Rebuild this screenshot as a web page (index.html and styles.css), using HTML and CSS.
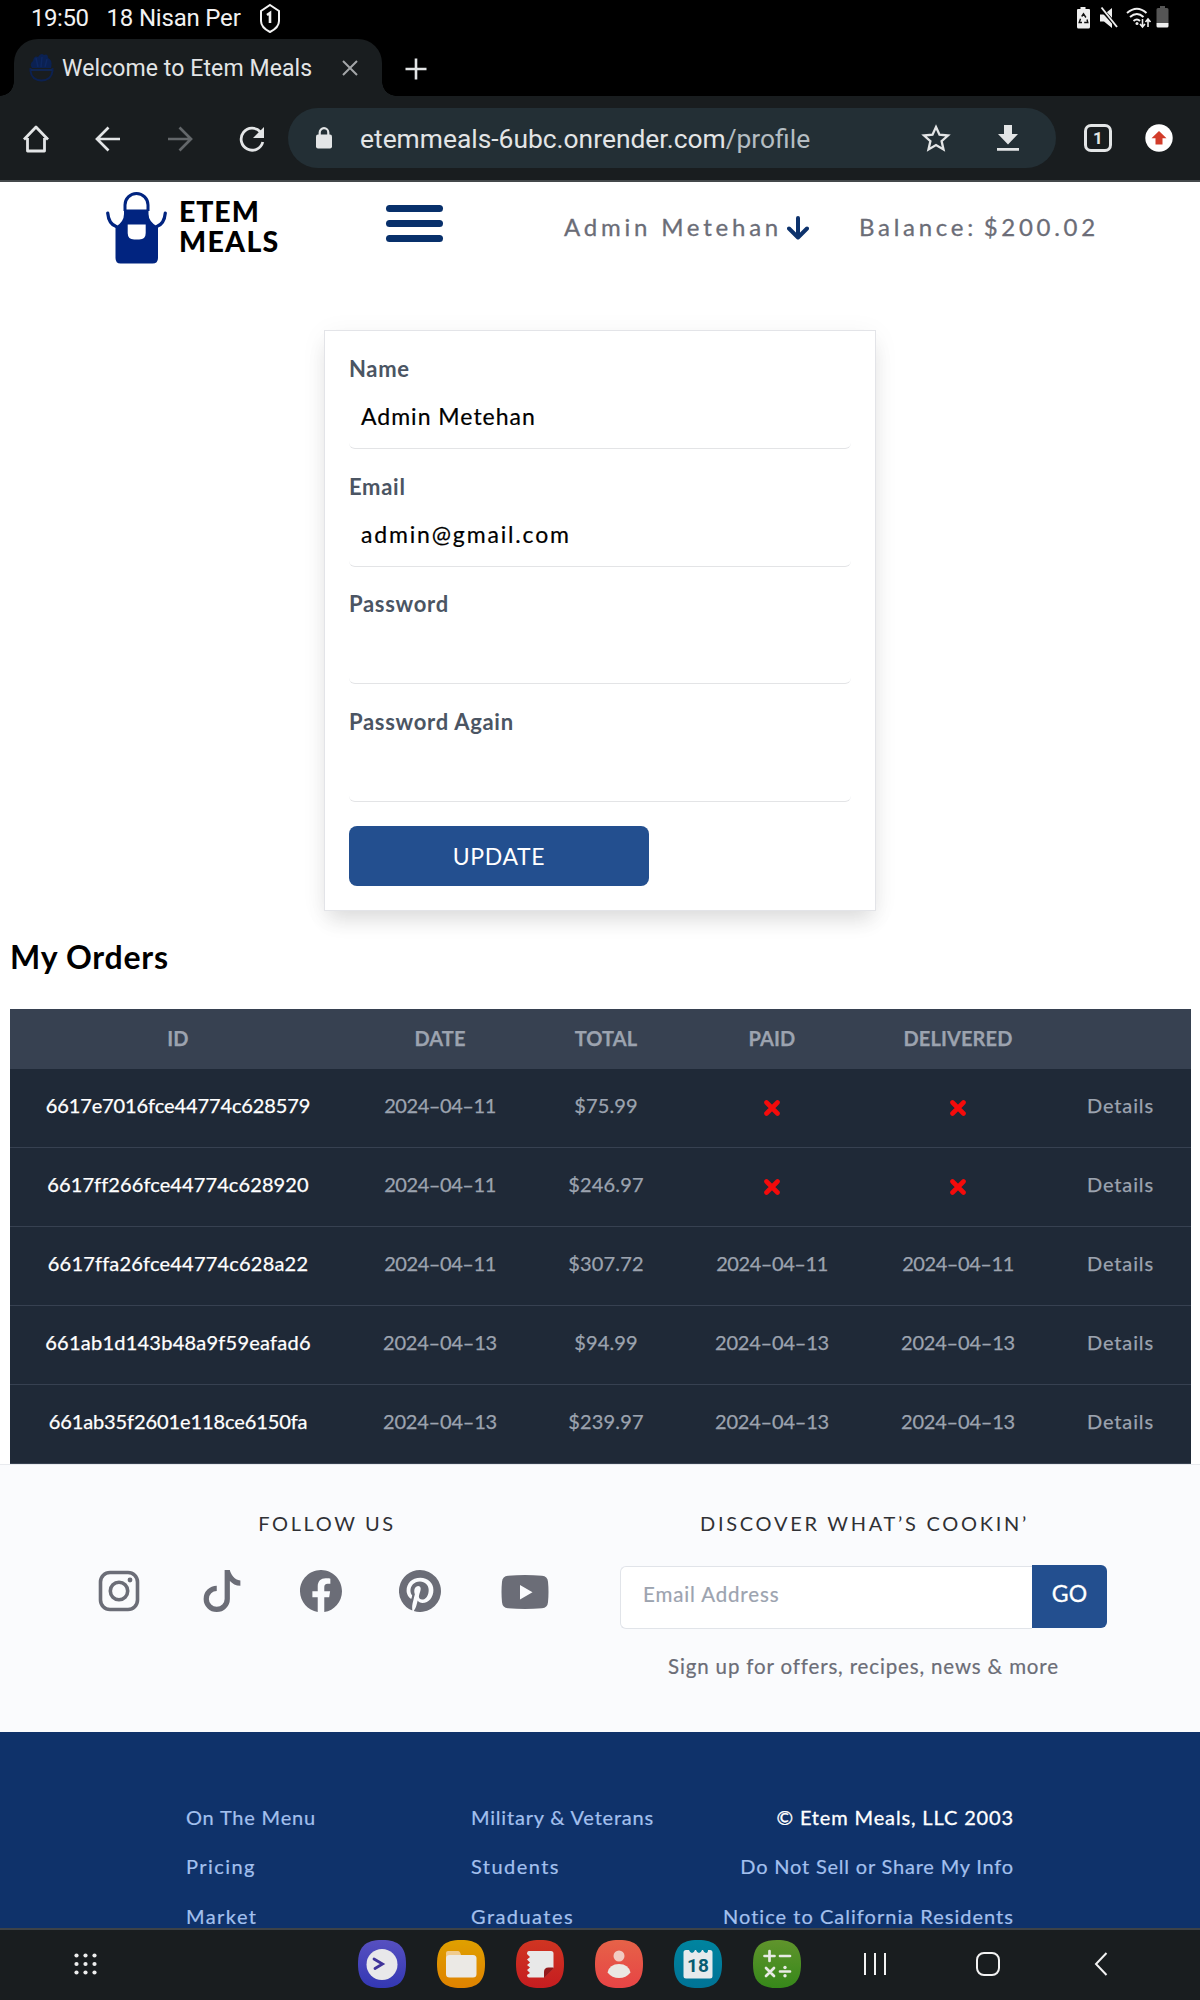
FILE: index.html
```html
<!DOCTYPE html>
<html lang="en">
<head>
<meta charset="utf-8">
<title>Welcome to Etem Meals</title>
<link rel="stylesheet" href="styles.css">
</head>
<body>
<div class="status">
  <span class="clock">19:50</span><span class="date">18 Nisan Per</span>
  <svg class="shield" width="22" height="31" viewBox="0 0 22 31"><path d="M11 2 20 8v10c0 5-5 9-9 11-4-2-9-6-9-11V8z" fill="none" stroke="#f2f2f2" stroke-width="2"/><path d="M8 12l3-2v10" fill="none" stroke="#f2f2f2" stroke-width="2.6"/></svg>
  <svg class="status-icons" width="94" height="24" viewBox="0 0 94 24">
    <path d="M4.500 1h5v2H13q1 0 1 1v17q0 1.500-1.500 1.500h-10Q1 22.500 1 21V4q0-1 1-1h2.500z" fill="#eee"/>
    <path d="M5.700 10.500l1.800-2.700 2.400 3.700M11 13.500l.8 3H8.200M6 16.500H3.200l1.300-3.700" fill="none" stroke="#111" stroke-width="1.400"/>
    <path d="M24 8.500h4L36 2v20l-8-6.500h-4z" fill="#eee"/><path d="M25 2.500l17 19" stroke="#000" stroke-width="4"/><path d="M25.500 1.500l15.500 19.500" stroke="#eee" stroke-width="1.900"/>
    <g fill="none" stroke="#eee" stroke-width="2"><path d="M51 7q10-8.500 19.500 0M54 11q7-6 13.500 0M57.500 15q3.500-3 6.500 0"/><path d="M66.500 13v7M64 18l2.500 3 2.500-3M72 21v-7M69.500 16l2.500-3 2.500 3" stroke-width="1.600"/></g><circle cx="61" cy="17.500" r="1.500" fill="#eee"/>
    <path d="M84 0h5v2h2q1.500 0 1.500 1.500V17h-12V3.500Q80.500 2 82 2h2z" fill="#555"/><path d="M80.500 17h12v3q0 1.500-1.500 1.500h-9q-1.500 0-1.500-1.500z" fill="#eee"/>
  </svg>
</div>
<div class="tabs">
  <div class="tab">
    <svg class="favicon" width="25" height="29" viewBox="0 0 25 29"><path d="M3 15Q0 11 4 8q1-6 5-4 3-5 6-2 4-2 4 3 5 2 3 10z" fill="#0b2152"/><path d="M1.500 15v3q1 9 11 9.500 10-.5 11-9.500v-3" fill="none" stroke="#0c2150" stroke-width="2"/><path d="M2 17h21M7 5l2 9M13 4l-1 10M18 6l-2 8" stroke="#0e2862" stroke-width="1.500" fill="none"/></svg>
    <span class="tab-title">Welcome to Etem Meals</span>
    <svg width="18" height="18" viewBox="0 0 18 18"><path d="M2 2l14 14M16 2L2 16" stroke="#a3a6a8" stroke-width="2"/></svg>
  </div>
  <svg class="newtab" width="22" height="22" viewBox="0 0 22 22"><path d="M11 .5v21M.5 11h21" stroke="#e3e5e6" stroke-width="2.600"/></svg>
</div>
<div class="toolbar">
  <svg class="home" width="28" height="28" viewBox="0 0 28 28"><path d="M5.500 13v13h17V13M2 14.500L14 2l12 12.500" fill="none" stroke="#e3e5e6" stroke-width="2.800" stroke-linejoin="round"/></svg>
  <svg class="back" width="26" height="26" viewBox="0 0 26 26"><path d="M25 13H2.500M13.500 1.500L2 13l11.500 11.500" fill="none" stroke="#e3e5e6" stroke-width="2.700"/></svg>
  <svg class="fwd" width="26" height="26" viewBox="0 0 26 26"><path d="M1 13h22.500M12.500 1.500L24 13 12.500 24.500" fill="none" stroke="#63676a" stroke-width="2.700"/></svg>
  <svg class="reload" width="26" height="26" viewBox="0 0 26 26"><path d="M21.500 6A11 11 0 1 0 23.800 16" fill="none" stroke="#e3e5e6" stroke-width="2.800"/><path d="M25 1v11H14z" fill="#e3e5e6"/></svg>
  <div class="urlbar">
    <svg class="lock" width="16" height="22" viewBox="0 0 16 22"><rect y="7.500" width="16" height="14" rx="2" fill="#e3e5e6"/><path d="M3.700 9V5.500a4.300 4.300 0 0 1 8.600 0V9" fill="none" stroke="#e3e5e6" stroke-width="2.200"/></svg>
    <span class="url">etemmeals-6ubc.onrender.com<span class="path">/profile</span></span>
    <svg class="star" width="30" height="28" viewBox="0 0 30 28"><path d="M15 3l3.500 7.700 8.500.8-6.400 5.600 1.900 8.300L15 21l-7.500 4.400 1.900-8.300L3 11.500l8.500-.8z" fill="none" stroke="#e3e5e6" stroke-width="2.300"/></svg>
    <svg class="dl" width="22" height="26" viewBox="0 0 22 26"><path d="M7 0h8v9h6L11 19.500 1 9h6zM0 23h22v2.800H0z" fill="#e3e5e6"/></svg>
  </div>
  <div class="tabcount">1</div>
  <svg class="upd" width="28" height="28" viewBox="0 0 28 28"><circle cx="14" cy="14" r="13.700" fill="#fff"/><path d="M14 7l7.500 7.300h-4V20.500h-7v-6.200h-4z" fill="#d23c2a"/></svg>
</div>
<main class="page">
  <header class="head">
    <svg class="apron" width="61" height="73" viewBox="0 0 61 73"><path d="M19 20V14a11.500 11.500 0 0 1 23 0v6" fill="none" stroke="#012480" stroke-width="3"/><path d="M1.700 22q1 11 8.500 13.500M59.300 22q-1 11-8.500 13.500" fill="none" stroke="#012480" stroke-width="3.200" stroke-linecap="round"/><path d="M18 18.500h24.500V23q0 8 9.500 13v31q0 5.500-5.500 5.500h-32Q9.500 72.500 9.500 67V36Q18 31 18 23z" fill="#012480"/><path d="M21.700 33.500h18v8.500q0 6.500-6.500 6.500h-5q-6.500 0-6.500-6.500z" fill="#fff"/></svg>
    <div class="brand"><span class="brand-top">ETEM</span><span class="brand-bottom">MEALS</span></div>
    <div class="burger"><i></i><i></i><i></i></div>
    <span class="nav user">Admin Metehan</span>
    <svg class="down" width="22" height="24" viewBox="0 0 22 24"><path d="M11 2v19M2 12.500l9 9 9-9" fill="none" stroke="#0d326c" stroke-width="4" stroke-linecap="round" stroke-linejoin="round"/></svg>
    <span class="nav balance">Balance:&thinsp;$200.02</span>
  </header>
  <form class="card">
    <div class="field"><label>Name</label><div class="input">Admin Metehan</div></div>
    <div class="field"><label>Email</label><div class="input email">admin@gmail.com</div></div>
    <div class="field"><label>Password</label><div class="input"></div></div>
    <div class="field"><label>Password Again</label><div class="input"></div></div>
    <div class="btn">UPDATE</div>
  </form>
  <h2>My Orders</h2>
  <table class="orders">
    <colgroup><col class="c1"><col class="c2"><col class="c3"><col class="c4"><col class="c5"><col class="c6"></colgroup>
    <thead><tr><th>ID</th><th>DATE</th><th>TOTAL</th><th>PAID</th><th>DELIVERED</th><th></th></tr></thead>
    <tbody>
      <tr><td>6617e7016fce44774c628579</td><td>2024–04–11</td><td>$75.99</td><td><svg class="x" width="16" height="16" viewBox="0 0 16 16"><path d="M2.500 2.500l11 11M13.500 2.500l-11 11"/></svg></td><td><svg class="x" width="16" height="16" viewBox="0 0 16 16"><path d="M2.500 2.500l11 11M13.500 2.500l-11 11"/></svg></td><td>Details</td></tr>
      <tr><td>6617ff266fce44774c628920</td><td>2024–04–11</td><td>$246.97</td><td><svg class="x" width="16" height="16" viewBox="0 0 16 16"><path d="M2.500 2.500l11 11M13.500 2.500l-11 11"/></svg></td><td><svg class="x" width="16" height="16" viewBox="0 0 16 16"><path d="M2.500 2.500l11 11M13.500 2.500l-11 11"/></svg></td><td>Details</td></tr>
      <tr><td>6617ffa26fce44774c628a22</td><td>2024–04–11</td><td>$307.72</td><td>2024–04–11</td><td>2024–04–11</td><td>Details</td></tr>
      <tr><td>661ab1d143b48a9f59eafad6</td><td>2024–04–13</td><td>$94.99</td><td>2024–04–13</td><td>2024–04–13</td><td>Details</td></tr>
      <tr><td>661ab35f2601e118ce6150fa</td><td>2024–04–13</td><td>$239.97</td><td>2024–04–13</td><td>2024–04–13</td><td>Details</td></tr>
    </tbody>
  </table>
  <section class="follow">
    <div class="social">
      <h3>FOLLOW US</h3>
      <div class="icons">
        <svg class="ig" width="42" height="42" viewBox="0 0 42 42" fill="none" stroke="#6b6d77"><rect x="2.500" y="2.500" width="37" height="37" rx="9.500" stroke-width="3.600"/><circle cx="21" cy="21" r="8.700" stroke-width="3.600"/><circle cx="32" cy="10" r="2.400" fill="#6b6d77" stroke="none"/></svg>
        <svg class="tt" width="42" height="42" viewBox="0 0 16 16"><path d="M9 0h1.980c.144.715.54 1.617 1.235 2.512C12.895 3.389 13.797 4 15 4v2c-1.753 0-3.070-.814-4-1.829V11a5 5 0 1 1-5-5v2a3 3 0 1 0 3 3z"/></svg>
        <svg class="fb" width="42" height="42" viewBox="0 0 16 16"><path d="M16 8.049c0-4.446-3.582-8.050-8-8.050C3.580 0-.002 3.603-.002 8.050c0 4.017 2.926 7.347 6.750 7.951v-5.625h-2.030V8.050H6.750V6.275c0-2.017 1.195-3.131 3.022-3.131.876 0 1.791.157 1.791.157v1.980h-1.009c-.993 0-1.303.621-1.303 1.258v1.510h2.218l-.354 2.326H9.250V16c3.824-.604 6.750-3.934 6.750-7.951"/></svg>
        <svg class="pin" width="42" height="42" viewBox="0 0 16 16"><path d="M8 0a8 8 0 0 0-2.915 15.452c-.07-.633-.134-1.606.027-2.297.146-.625.938-3.977.938-3.977s-.239-.479-.239-1.187c0-1.113.645-1.943 1.448-1.943.682 0 1.012.512 1.012 1.127 0 .686-.437 1.712-.663 2.663-.188.796.4 1.446 1.185 1.446 1.422 0 2.515-1.500 2.515-3.664 0-1.915-1.377-3.254-3.342-3.254-2.276 0-3.612 1.707-3.612 3.471 0 .688.265 1.425.595 1.826a.24.24 0 0 1 .056.23c-.061.252-.196.796-.222.907-.035.146-.116.177-.268.107-1-.465-1.624-1.926-1.624-3.100 0-2.523 1.834-4.840 5.286-4.840 2.775 0 4.932 1.977 4.932 4.620 0 2.757-1.739 4.976-4.151 4.976-.811 0-1.573-.421-1.834-.919l-.498 1.902c-.181.695-.669 1.566-.995 2.097A8 8 0 1 0 8 0"/></svg>
        <svg class="yt" width="48" height="34" viewBox="0 0 48 34"><path d="M7 .8Q24-.6 41 .8q5.500.5 6 6 1 10.200 0 20.400-.5 5.500-6 6-17 1.400-34 0-5.500-.5-6-6Q0 17 1 6.800q.5-5.500 6-6zM19 10v14.500L31.500 17.200z"/></svg>
      </div>
    </div>
    <div class="signup">
      <h3 class="discover">DISCOVER WHAT’S COOKIN’</h3>
      <div class="mail"><div class="mailbox">Email Address</div><div class="go">GO</div></div>
      <p>Sign up for offers, recipes, news &amp; more</p>
    </div>
  </section>
  <footer class="links">
    <div class="col a"><span>On The Menu</span><span class="wide">Pricing</span><span class="wide">Market</span></div>
    <div class="col b"><span>Military &amp; Veterans</span><span class="wide">Students</span><span class="wide">Graduates</span></div>
    <div class="col c"><span class="copy">© Etem Meals, LLC 2003</span><span>Do Not Sell or Share My Info</span><span class="notice">Notice to California Residents</span></div>
  </footer>
</main>
<nav class="dock">
  <svg class="apps" width="24" height="22" viewBox="0 0 24 22" fill="#eee"><circle cx="2.500" cy="2.500" r="2.100"/><circle cx="11.500" cy="2.500" r="2.100"/><circle cx="20.500" cy="2.500" r="2.100"/><circle cx="2.500" cy="11" r="2.100"/><circle cx="11.500" cy="11" r="2.100"/><circle cx="20.500" cy="11" r="2.100"/><circle cx="2.500" cy="19.500" r="2.100"/><circle cx="11.500" cy="19.500" r="2.100"/><circle cx="20.500" cy="19.500" r="2.100"/></svg>
  <div class="dock-apps">
    <svg width="48" height="48" viewBox="0 0 48 48"><defs><linearGradient id="p" x2="0" y2="1"><stop stop-color="#5750c0"/><stop offset="1" stop-color="#3338b4"/></linearGradient><linearGradient id="o" x2="0" y2="1"><stop stop-color="#dfa000"/><stop offset="1" stop-color="#df8200"/></linearGradient><linearGradient id="r" x2="0" y2="1"><stop stop-color="#d03522"/><stop offset="1" stop-color="#c51d20"/></linearGradient><linearGradient id="s" x2="0" y2="1"><stop stop-color="#e66248"/><stop offset="1" stop-color="#e74445"/></linearGradient><linearGradient id="t" x2="0" y2="1"><stop stop-color="#00849f"/><stop offset="1" stop-color="#007396"/></linearGradient><linearGradient id="g" x2="0" y2="1"><stop stop-color="#60942c"/><stop offset="1" stop-color="#36881a"/></linearGradient></defs><path d="M24 0C41 0 48 7 48 24S41 48 24 48 0 41 0 24 7 0 24 0z" fill="url(#p)"/><circle cx="24" cy="24.500" r="15.500" fill="#e8e8ea"/><path d="M16 19l8.500 5-7.500 4.500" fill="none" stroke="#40349a" stroke-width="2.800" stroke-linecap="round"/></svg>
    <svg width="48" height="48" viewBox="0 0 48 48"><path d="M24 0C41 0 48 7 48 24S41 48 24 48 0 41 0 24 7 0 24 0z" fill="url(#o)"/><path d="M9 20v-7q0-2 2-2h10q2 0 3 4h10v5z" fill="#f0cb8e"/><rect x="9" y="15" width="30.500" height="22.500" rx="3.500" fill="#ebe9e5"/></svg>
    <svg width="48" height="48" viewBox="0 0 48 48"><path d="M24 0C41 0 48 7 48 24S41 48 24 48 0 41 0 24 7 0 24 0z" fill="url(#r)"/><path d="M13 11h22q2.500 0 2.500 2.500V28L28 37.500H13q-2 0-2-2.500l3-2-3-3 3-2.500-3-2.500 3-2.500-3-3 3-2.500-3-3q0-3 2-3z" fill="#e8e8e8"/><path d="M37.500 27.500v1L28 38v-6q0-4.500 4.500-4.500z" fill="#94191b"/></svg>
    <svg width="48" height="48" viewBox="0 0 48 48"><path d="M24 0C41 0 48 7 48 24S41 48 24 48 0 41 0 24 7 0 24 0z" fill="url(#s)"/><circle cx="24" cy="16" r="5.500" fill="#f1cbc2"/><path d="M12.500 32.500q2-8.500 11.500-8.500t11.500 8.500Q31 38 24 38t-11.500-5.500z" fill="#eae8e2"/></svg>
    <svg width="48" height="48" viewBox="0 0 48 48"><path d="M24 0C41 0 48 7 48 24S41 48 24 48 0 41 0 24 7 0 24 0z" fill="url(#t)"/><path d="M12 10h3q1 3 3 3t3-3h1q1 3 3 3t3-3h1q1 3 3 3t2-3h2q2.500 0 2.500 2.500V36q0 2.500-2.500 2.500H12q-2.500 0-2.500-2.500V12.500Q9.500 10 12 10z" fill="#e6eaec"/><text x="24" y="31.500" text-anchor="middle" class="day">18</text></svg>
    <svg width="48" height="48" viewBox="0 0 48 48"><path d="M24 0C41 0 48 7 48 24S41 48 24 48 0 41 0 24 7 0 24 0z" fill="url(#g)"/><path d="M11.500 16h10M16.500 11v10M27 16h10M13 28l8 8M21 28l-8 8M27 31.500h10" stroke="#e8eae4" stroke-width="2.700" stroke-linecap="round"/><circle cx="32" cy="27.500" r="1.700" fill="#e8eae4"/><circle cx="32" cy="35.700" r="1.700" fill="#e8eae4"/></svg>
  </div>
  <svg class="recents" width="24" height="24" viewBox="0 0 24 24"><path d="M2 1v22M12 1v22M22 1v22" stroke="#f2f2f2" stroke-width="2"/></svg>
  <svg class="homebtn" width="24" height="24" viewBox="0 0 24 24"><rect x="1" y="1" width="22" height="22" rx="7" fill="none" stroke="#f2f2f2" stroke-width="2"/></svg>
  <svg class="backbtn" width="14" height="24" viewBox="0 0 14 24"><path d="M12.500 1L2 12l10.500 11" fill="none" stroke="#f2f2f2" stroke-width="2"/></svg>
</nav>
</body>
</html>
```
FILE: styles.css
```css
*{box-sizing:border-box}
body{margin:0;width:1200px;height:2000px;overflow:hidden;display:flex;flex-direction:column;background:#000;font-family:Lato,"Liberation Sans",sans-serif;color:#000}
svg{flex:none;display:block}

/* Device status bar */
.status{height:39px;flex:none;display:flex;align-items:center;padding:0 61px 3px 31px;font:24px/36px Roboto,sans-serif;color:#f2f2f2;white-space:nowrap}
.clock{letter-spacing:-.44px}
.date{margin-left:18px;letter-spacing:-.2px}
.shield{margin-left:18px}
.status-icons{margin-left:auto;margin-right:-31px}

/* Browser tabs */
.tabs{height:57px;flex:none;display:flex;align-items:center;padding-left:14px}
.tab{position:relative;width:368px;height:57px;background:#191d1f;border-radius:24px 24px 0 0;display:flex;align-items:center;padding-left:15px;color:#e3e5e6;font:23px/57px Roboto,sans-serif;white-space:nowrap}
.tab::before,.tab::after{content:"";position:absolute;bottom:0;width:14px;height:14px}
.tab::before{left:-14px;background:radial-gradient(circle at 0 0,transparent 13.500px,#191d1f 14px)}
.tab::after{right:-14px;background:radial-gradient(circle at 100% 0,transparent 13.500px,#191d1f 14px)}
.tab-title{width:279px;margin-left:8px;padding-top:1px;letter-spacing:.1px}
.newtab{margin-left:23px;margin-top:2px}

/* Browser toolbar */
.toolbar{height:86px;flex:none;background:#191d1f;border-bottom:2px solid #44484b;display:flex;align-items:center;padding-left:22px}
.home,.back,.fwd,.reload{margin-top:1px}
.back{margin-left:45px}.fwd{margin-left:46px}.reload{margin-left:46px}
.urlbar{width:768px;height:60px;margin-left:23px;border-radius:30px;background:#232f35;display:flex;align-items:center;padding-left:28px}
.url{width:560px;margin-left:28px;padding-top:1px;font:26.400px/60px Roboto,sans-serif;color:#e3e5e6;white-space:nowrap}
.path{color:#b4bdc2}
.star{margin-left:1px}.dl{margin-left:46px}
.tabcount{width:28px;height:28px;margin-left:28px;border:3px solid #e3e5e6;border-radius:7px;color:#e3e5e6;font:700 17px/22px Roboto,sans-serif;text-align:center}
.upd{margin-left:33px}

/* Site header */
.page{flex:1;min-height:0;overflow:hidden;background:#fff;display:flex;flex-direction:column}
.head{height:92px;flex:none;display:flex;align-items:center;padding-left:106px;white-space:nowrap}
.apron{margin-bottom:1px}
.brand{display:flex;flex-direction:column;width:207px;margin-left:12px;margin-bottom:4px;font-weight:900;font-size:28.500px;line-height:30px}
.brand-top{letter-spacing:.9px}
.brand-bottom{letter-spacing:1.300px}
.burger{display:flex;flex-direction:column;gap:8px;margin-bottom:9px;width:57px}
.burger i{height:7.300px;border-radius:4px;background:#08306b}
.nav{width:217px;font-size:24px;line-height:32px;margin-bottom:2px;color:#6b6d77;-webkit-text-stroke:.3px #6b6d77}
.user{margin-left:121px;letter-spacing:3.780px}
.balance{width:240px;letter-spacing:3.720px}
.down{margin:0 50px 0 6px}

/* Profile form */
.card{width:552px;height:581px;flex:none;margin:56px 0 0 324px;padding:24px;border:1px solid #e3e4e8;box-shadow:0 13px 20px -4px rgba(0,0,0,.11),0 4px 26px rgba(0,0,0,.05);display:flex;flex-direction:column;gap:23.600px}
.field{height:94px;flex:none}
.field label{display:block;font-size:22px;font-weight:700;line-height:28px;letter-spacing:.7px;color:#4b5563}
.input{height:66px;border-bottom:1.500px solid #e3e4e6;border-radius:6px;padding:0 12px;font-size:23px;line-height:66px;letter-spacing:1px;-webkit-text-stroke:.2px #000}
.email{letter-spacing:1.840px}
.btn{width:300px;height:60px;flex:none;border-radius:8px;background:#234f8f;color:#fff;font-size:23px;line-height:60px;letter-spacing:.68px;text-align:center;margin-top:.600px}

/* Orders */
h2{margin:26px 0 32px 10px;font-size:32px;line-height:40px;font-weight:700;letter-spacing:.75px;flex:none}
.orders{width:1181px;margin-left:10px;flex:none;table-layout:fixed;border-spacing:0;background:#1f2937;color:#9ca3af;font-size:20px;text-align:center;white-space:nowrap;-webkit-text-stroke:.25px currentColor}
.c1{width:336px}.c2{width:188px}.c3{width:144px}.c4{width:188px}.c5{width:184px}.c6{width:141px}
th{height:60px;padding:0 0 3px;background:#374151;font-size:20px;font-weight:700;letter-spacing:.1px}
td{height:79px;padding:0 0 6px;border-bottom:1px solid #374151;letter-spacing:-.2px}
tr:nth-child(-n+2) td:nth-child(2),tr:nth-child(3) td{letter-spacing:-.44px}
td:nth-child(3),tr:nth-child(3) td:nth-child(3){letter-spacing:.15px}
td:last-child,tr:nth-child(3) td:last-child{letter-spacing:.86px}
td:first-child{color:#fff;letter-spacing:-.1px}
tr:nth-child(2) td:first-child{letter-spacing:.1px}
tr:nth-child(3) td:first-child{letter-spacing:.2px}
tr:nth-child(4) td:first-child{letter-spacing:.24px}
.x{margin:5px auto 0;stroke:#f40b0b;stroke-width:4.600;stroke-linecap:round}

/* Social links and newsletter */
.follow{height:268px;flex:none;background:#fafbfd;border-top:1px solid #e8eaee;display:flex;padding:41px 93px 0 98px}
.social{width:454px}
h3{margin:0;width:458px;font-size:20px;line-height:34px;font-weight:400;letter-spacing:2.600px;color:#303135;text-align:center;white-space:nowrap}
.discover{width:489px;letter-spacing:2.720px}
.icons{display:flex;margin-top:30px;fill:#6b6d77}
.tt{margin-left:61px}.fb{margin-left:57px}.pin{margin-left:57px}.yt{margin:5px 0 0 60px}
.signup{width:487px;margin-left:68px}
.mail{display:flex;margin-top:25px}
.mailbox{width:412px;height:63px;margin-top:1px;background:#fff;border:1px solid #e1e4e9;border-right:0;border-radius:6px 0 0 6px;padding-left:22px;font-size:20.500px;line-height:55px;letter-spacing:.87px;color:#9ca3af;-webkit-text-stroke:.2px #9ca3af}
.go{width:75px;height:63px;background:#234f8f;border-radius:0 6px 6px 0;color:#fff;font-size:23px;line-height:57px;letter-spacing:.2px;text-align:center;-webkit-text-stroke:.3px #fff}
p{margin:22px 0 0;font-size:20.500px;line-height:30px;letter-spacing:.85px;color:#6b6d77;text-align:center;white-space:nowrap;-webkit-text-stroke:.2px #6b6d77}

/* Footer */
.links{flex:1;background:#0f326a;display:flex;padding:61px 0 0 186px;font-size:20px;letter-spacing:.8px;color:#a3c0ee;white-space:nowrap;-webkit-text-stroke:.2px currentColor}
.col{display:flex;flex-direction:column;align-items:flex-start;line-height:49.400px}
.a{width:285px}.b{width:200px}.c{width:343px;align-items:flex-end}
.wide{letter-spacing:1.450px}
.copy{color:#fff;-webkit-text-stroke:.3px #fff;letter-spacing:.86px}
.notice{letter-spacing:1.020px}

/* Device dock */
.dock{height:72px;flex:none;background:#191d1f;border-top:2px solid #3e4347;display:flex;align-items:center;padding:0 0 3px 74px}
.dock-apps{display:flex;gap:31px;margin-left:259.500px}
.day{font:700 19px Roboto,sans-serif;fill:#085c72}
.recents{margin-left:62px}.homebtn{margin-left:89px}.backbtn{margin-left:94px}
```
